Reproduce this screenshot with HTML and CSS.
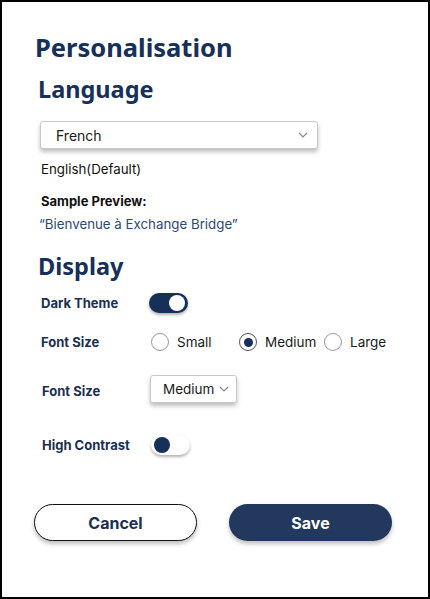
FILE: index.html
```html
<!DOCTYPE html>
<html lang="en">
<head>
    <meta charset="UTF-8">
    <meta name="viewport" content="width=device-width, initial-scale=1.0">
    <title>Personalisation</title>
    <link rel="stylesheet" href="styles.css">
</head>
<body>

    <div class="frame">
        <h1 class="title">Personalisation</h1>

        <h2 class="section">Language</h2>

        <div class="select select-lang">
            <span>French</span>
            <svg class="chevron" width="10" height="6" viewBox="0 0 10 6"><polyline points="1,1 5,5 9,1" /></svg>
        </div>

        <p class="default-lang">English(Default)</p>
        <p class="preview-label">Sample Preview:</p>
        <p class="preview-text">“Bienvenue à Exchange Bridge”</p>

        <h2 class="section section-display">Display</h2>

        <div class="row row-dark">
            <span class="label">Dark Theme</span>
            <div class="toggle on"><span class="knob"></span></div>
        </div>

        <div class="row row-radios">
            <span class="label">Font Size</span>
            <div class="options">
                <label class="option"><span class="radio"></span>Small</label>
                <label class="option"><span class="radio checked"></span>Medium</label>
                <label class="option"><span class="radio"></span>Large</label>
            </div>
        </div>

        <div class="row row-select">
            <span class="label label-low">Font Size</span>
            <div class="select select-size">
                <span>Medium</span>
                <svg class="chevron" width="10" height="6" viewBox="0 0 10 6"><polyline points="1,1 5,5 9,1" /></svg>
            </div>
        </div>

        <div class="row row-contrast">
            <span class="label">High Contrast</span>
            <div class="toggle off"><span class="knob"></span></div>
        </div>

        <div class="actions">
            <button class="btn btn-cancel">Cancel</button>
            <button class="btn btn-save">Save</button>
        </div>
    </div>

</body>
</html>
```

FILE: styles.css
```css
body {
    margin: 0;
    padding: 0;
    background-color: #fff;
    font-family: Inter, "Liberation Sans", sans-serif;
    color: #111;
}

.frame {
    box-sizing: border-box;
    width: 430px;
    height: 599px;
    border: 2px solid #000;
    padding: 29px 0 0 33px;
}

p {
    margin: 0;
}

.title {
    font-family: "Noto Sans", "Open Sans", sans-serif;
    font-size: 25.5px;
    line-height: 32px;
    font-weight: 700;
    color: #163059;
    margin: 0;
}

.section {
    font-family: "Noto Sans", "Open Sans", sans-serif;
    font-size: 23.5px;
    line-height: 28px;
    font-weight: 700;
    color: #163059;
    margin: 12px 0 0 3px;
}

.section-display {
    line-height: 30px;
    margin-top: 18px;
}

/* dropdowns */
.select {
    box-sizing: border-box;
    display: flex;
    align-items: center;
    justify-content: space-between;
    height: 28px;
    background: #fff;
    border: 1px solid #c8c8c8;
    border-radius: 3px;
    box-shadow: 0 3px 4px rgba(0, 0, 0, 0.25);
    font-size: 14px;
    color: #1a1a1a;
}

.select-lang {
    width: 278px;
    margin: 18px 0 0 5px;
    padding: 0 9px 0 15px;
}

.select-size {
    width: 87px;
    padding: 0 7px 0 12px;
    font-size: 13.5px;
}

.chevron polyline {
    fill: none;
    stroke: #8a8a8a;
    stroke-width: 1.2;
}

.default-lang {
    font-size: 13.3px;
    line-height: 16px;
    margin: 12px 0 0 6px;
}

.preview-label {
    font-size: 13px;
    line-height: 16px;
    font-weight: 700;
    margin: 16px 0 0 6px;
}

.preview-text {
    font-size: 13.3px;
    line-height: 18px;
    color: #2d4a77;
    margin: 6px 0 0 4px;
}

/* setting rows */
.row {
    display: flex;
    align-items: center;
    margin-left: 6px;
}

.label {
    width: 108px;
    font-size: 13px;
    line-height: 16px;
    font-weight: 700;
    color: #1b2f52;
}

.label-low {
    margin-top: 4px;
    padding-left: 1px;
    width: 108px;
}

.row-dark {
    height: 20px;
    margin-top: 12px;
}

.row-radios {
    height: 18px;
    margin-top: 20px;
}

.row-select {
    margin-top: 24px;
}

.row-contrast {
    height: 20px;
    margin-top: 32px;
    padding-left: 1px;
}

.row-contrast .label {
    width: 109px;
}

.toggle {
    box-sizing: border-box;
    width: 39px;
    height: 20px;
    border-radius: 10px;
    display: flex;
    align-items: center;
    padding: 0 3px;
    box-shadow: 0 2px 3px rgba(0, 0, 0, 0.3);
}

.toggle .knob {
    width: 16px;
    height: 16px;
    border-radius: 50%;
}

.toggle.on {
    background: #163059;
    justify-content: flex-end;
}

.toggle.on .knob {
    background: #fff;
}

.toggle.off {
    background: #fff;
}

.toggle.off .knob {
    background: #163059;
}

.options {
    display: grid;
    grid-template-columns: 88px 85px auto;
    margin-left: 2px;
}

.option {
    display: flex;
    align-items: center;
    gap: 8px;
    font-size: 13.5px;
    color: #1a1a1a;
}

.radio {
    box-sizing: border-box;
    width: 18px;
    height: 18px;
    border: 1px solid #9a9a9a;
    border-radius: 50%;
    display: flex;
    align-items: center;
    justify-content: center;
}

.radio.checked {
    border-color: #555;
}

.radio.checked::after {
    content: "";
    width: 9px;
    height: 9px;
    border-radius: 50%;
    background: #163059;
}

/* buttons */
.actions {
    display: flex;
    gap: 32px;
    margin: 49px 0 0 -1px;
}

.btn {
    box-sizing: border-box;
    width: 163px;
    height: 37px;
    border-radius: 19px;
    font-family: Inter, "Liberation Sans", sans-serif;
    font-size: 16px;
    font-weight: 700;
    box-shadow: 0 3px 4px rgba(0, 0, 0, 0.25);
    cursor: pointer;
}

.btn-cancel {
    background: #fff;
    border: 1px solid #111;
    color: #1b2f52;
}

.btn-save {
    background: #22385c;
    border: none;
    color: #fff;
}
```
